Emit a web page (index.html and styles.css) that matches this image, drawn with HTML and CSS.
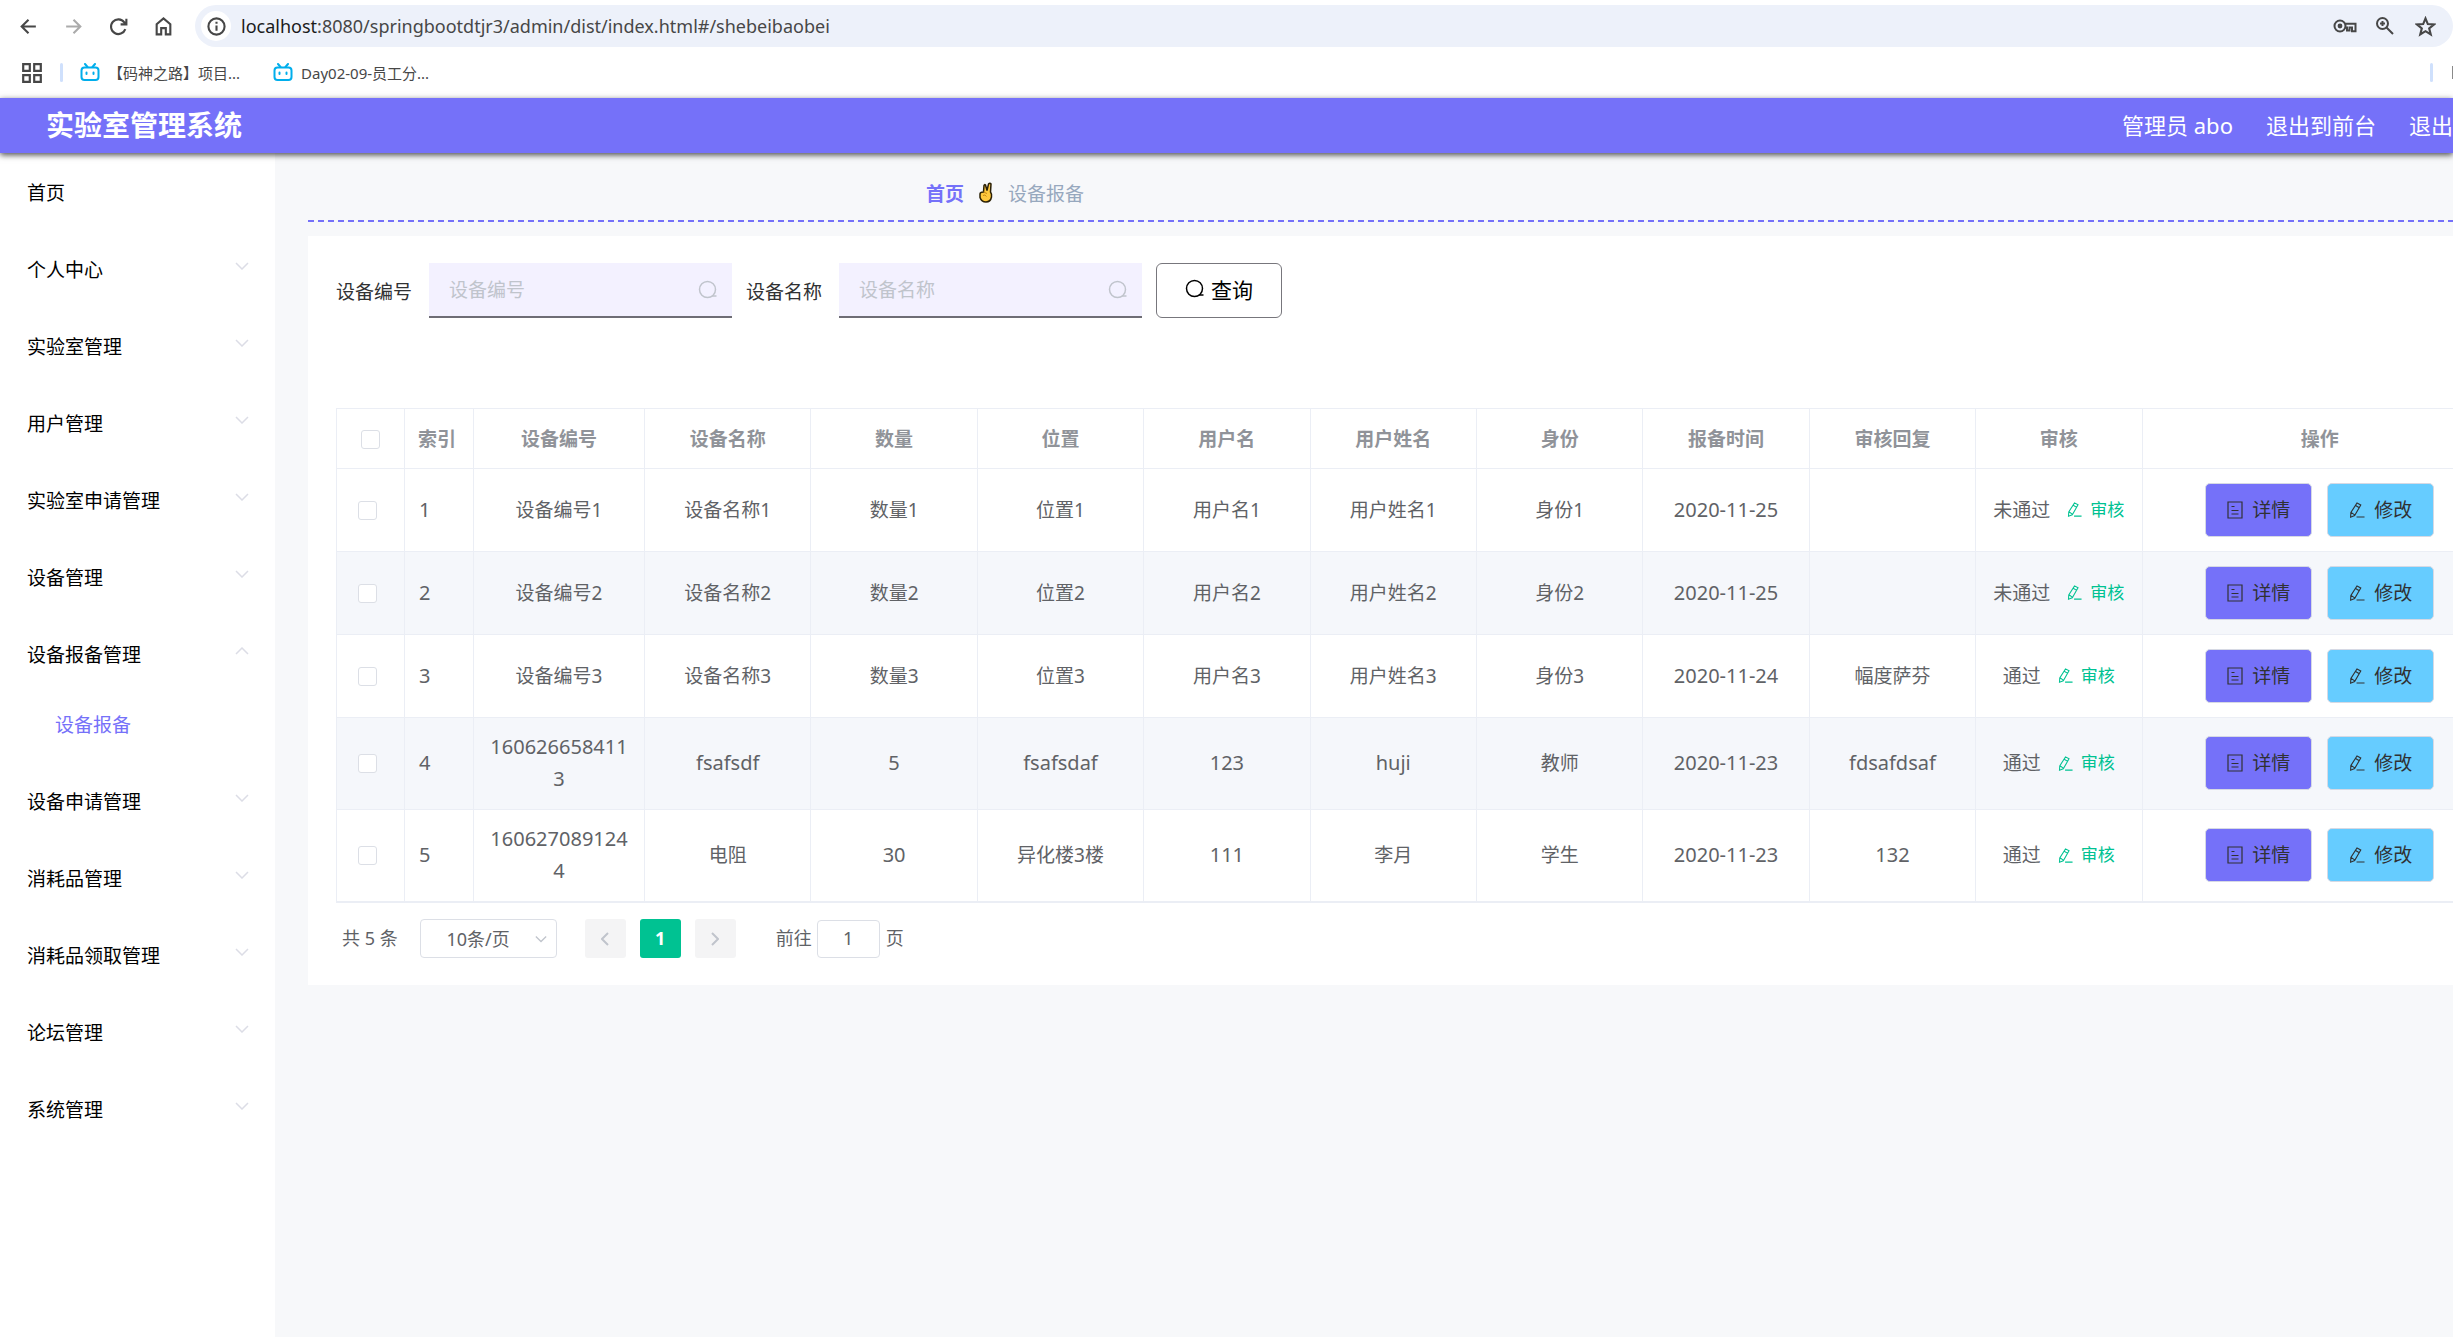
FILE: index.html
```html
<!DOCTYPE html>
<html lang="zh-CN">
<head>
<meta charset="utf-8">
<title>实验室管理系统</title>
<link rel="stylesheet" href="styles.css">
</head>
<body>
<svg class="sprite" aria-hidden="true">
  <symbol id="down" viewBox="0 0 14 8"><path d="M1 1l6 6 6-6"/></symbol>
  <symbol id="up" viewBox="0 0 14 8"><path d="M1 7l6-6 6 6"/></symbol>
  <symbol id="search" viewBox="0 0 20 20"><circle cx="9.5" cy="9.5" r="8"/><path d="M14 16h4.500"/></symbol>
  <symbol id="edit" viewBox="0 0 17 18"><path d="M8.500 1.500l4 2.200-6.500 11.300-4.300 1.700.3-5zM7 4.200l4 2.400M2.200 11.500l3.800 2.700M8 16.500h8.500"/></symbol>
  <symbol id="detail" viewBox="0 0 16 18"><path d="M1 1h14v16H1zM4.500 5.500h3M4.500 9.500h7M4.500 13h7"/></symbol>
  <symbol id="tv" viewBox="0 0 20 19"><path class="tv-line" d="M5 1l2.500 3M15 1l-2.500 3"/><rect class="tv-line" x="1.500" y="4.500" width="17" height="12.500" rx="3"/><path class="tv-line" d="M6.500 9.500v1.500M13.500 9.500v1.500"/></symbol>
</svg>

<div class="browser">
  <div class="toolbar">
    <button class="tool" aria-label="后退"><svg viewBox="0 0 20 20"><path d="M17 10H4M10 3.500L3.500 10l6.500 6.500"/></svg></button>
    <button class="tool muted" aria-label="前进"><svg viewBox="0 0 20 20"><path d="M3 10h13M10 3.500l6.500 6.500-6.500 6.500"/></svg></button>
    <button class="tool" aria-label="刷新"><svg viewBox="0 0 20 20"><path d="M16.500 12.500A7 7 0 1 1 15.500 6l1.500 1.700M17.500 2.500V8H12"/></svg></button>
    <button class="tool" aria-label="主页"><svg viewBox="0 0 20 20"><path d="M3.500 17.500V7.800L10 2.300l6.500 5.500v9.700h-4.300v-6H7.800v6z"/></svg></button>
    <div class="address">
      <span class="info"><svg viewBox="0 0 20 20"><circle cx="10" cy="10" r="7.700"/><path d="M10 9v5M10 5.500v1.800"/></svg></span>
      <span class="url"><b>localhost</b>:8080/springbootdtjr3/admin/dist/index.html#/shebeibaobei</span>
      <svg class="key" viewBox="0 0 24 16"><circle cx="7" cy="8" r="5.500"/><circle class="dot" cx="7" cy="8" r="2.400"/><path d="M12 5.700h10.500v7.500h-3.500V9.500h-2.500v3h-2.500v-3H12"/></svg>
      <svg class="mag" viewBox="0 0 20 20"><circle cx="7.500" cy="7.500" r="5.500"/><path d="M11.500 11.500l6.500 6.500M7.500 5v5M5 7.500h5"/></svg>
      <svg class="star" viewBox="0 0 20 20"><path d="M10 2.300l2.200 5.400 5.800.4-4.500 3.700 1.500 5.700-5-3.100-5 3.100 1.500-5.700L2 8.100l5.800-.4z"/></svg>
    </div>
  </div>
  <div class="bookmarks">
    <svg class="apps" viewBox="0 0 20 20"><path d="M2 2h6v6H2zM12 2h6v6h-6zM2 12h6v6H2zM12 12h6v6h-6z"/></svg>
    <span class="divider"></span>
    <a class="bookmark" href="#"><svg><use href="#tv"/></svg>【码神之路】项目...</a>
    <a class="bookmark" href="#"><svg><use href="#tv"/></svg>Day02-09-员工分...</a>
    <span class="divider last"></span>
    <span class="folder"></span>
  </div>
</div>

<header class="header">
  <h1>实验室管理系统</h1>
  <nav><span>管理员 abo</span><a href="#">退出到前台</a><a href="#">退出</a></nav>
</header>

<div class="layout">
  <aside class="sidebar">
    <a class="item" href="#">首页</a>
    <a class="item" href="#">个人中心<svg><use href="#down"/></svg></a>
    <a class="item" href="#">实验室管理<svg><use href="#down"/></svg></a>
    <a class="item" href="#">用户管理<svg><use href="#down"/></svg></a>
    <a class="item" href="#">实验室申请管理<svg><use href="#down"/></svg></a>
    <a class="item" href="#">设备管理<svg><use href="#down"/></svg></a>
    <a class="item" href="#">设备报备管理<svg><use href="#up"/></svg></a>
    <a class="subitem" href="#">设备报备</a>
    <a class="item" href="#">设备申请管理<svg><use href="#down"/></svg></a>
    <a class="item" href="#">消耗品管理<svg><use href="#down"/></svg></a>
    <a class="item" href="#">消耗品领取管理<svg><use href="#down"/></svg></a>
    <a class="item" href="#">论坛管理<svg><use href="#down"/></svg></a>
    <a class="item" href="#">系统管理<svg><use href="#down"/></svg></a>
  </aside>

  <main class="main">
    <div class="wide">
      <nav class="breadcrumb">
        <a href="#">首页</a>
        <svg viewBox="0 0 14 21"><path d="M4.500 10L5 3.500Q5.500 2 6.500 3L8 8.500 9.500 2Q11 .3 12 2l-.5 8q1.500 2 1 5-1 5-5.500 5T1 15.500V12q0-2 3.500-2z"/><path class="crease" d="M4.500 10l3.500 1.500M4 13.500q2-1.500 3.500 1"/></svg>
        <span>设备报备</span>
      </nav>

      <section class="card">
        <form class="search">
          <label for="code">设备编号</label>
          <div class="field"><input id="code" type="text" placeholder="设备编号"><svg><use href="#search"/></svg></div>
          <label for="name">设备名称</label>
          <div class="field"><input id="name" type="text" placeholder="设备名称"><svg><use href="#search"/></svg></div>
          <button type="button" class="query"><svg><use href="#search"/></svg>查询</button>
        </form>

        <table>
          <colgroup><col class="c-check"><col class="c-index"><col class="c-code"><col span="9" class="c-text"><col></colgroup>
          <thead>
            <tr><th><input type="checkbox" aria-label="全选"></th><th class="left">索引</th><th>设备编号</th><th>设备名称</th><th>数量</th><th>位置</th><th>用户名</th><th>用户姓名</th><th>身份</th><th>报备时间</th><th>审核回复</th><th>审核</th><th>操作</th></tr>
          </thead>
          <tbody>
            <tr><td class="left"><input type="checkbox" aria-label="选择1"></td><td class="left num">1</td><td>设备编号1</td><td>设备名称1</td><td>数量1</td><td>位置1</td><td>用户名1</td><td>用户姓名1</td><td>身份1</td><td class="num">2020-11-25</td><td></td>
              <td class="audit"><div><span>未通过</span><button><svg><use href="#edit"/></svg>审核</button></div></td>
              <td><div class="ops"><button class="view"><svg><use href="#detail"/></svg>详情</button><button class="change"><svg><use href="#edit"/></svg>修改</button></div></td></tr>
            <tr><td class="left"><input type="checkbox" aria-label="选择2"></td><td class="left num">2</td><td>设备编号2</td><td>设备名称2</td><td>数量2</td><td>位置2</td><td>用户名2</td><td>用户姓名2</td><td>身份2</td><td class="num">2020-11-25</td><td></td>
              <td class="audit"><div><span>未通过</span><button><svg><use href="#edit"/></svg>审核</button></div></td>
              <td><div class="ops"><button class="view"><svg><use href="#detail"/></svg>详情</button><button class="change"><svg><use href="#edit"/></svg>修改</button></div></td></tr>
            <tr><td class="left"><input type="checkbox" aria-label="选择3"></td><td class="left num">3</td><td>设备编号3</td><td>设备名称3</td><td>数量3</td><td>位置3</td><td>用户名3</td><td>用户姓名3</td><td>身份3</td><td class="num">2020-11-24</td><td>幅度萨芬</td>
              <td class="audit"><div><span>通过</span><button><svg><use href="#edit"/></svg>审核</button></div></td>
              <td><div class="ops"><button class="view"><svg><use href="#detail"/></svg>详情</button><button class="change"><svg><use href="#edit"/></svg>修改</button></div></td></tr>
            <tr><td class="left"><input type="checkbox" aria-label="选择4"></td><td class="left num">4</td><td class="num">1606266584113</td><td class="num">fsafsdf</td><td class="num">5</td><td class="num">fsafsdaf</td><td class="num">123</td><td class="num">huji</td><td>教师</td><td class="num">2020-11-23</td><td class="num">fdsafdsaf</td>
              <td class="audit"><div><span>通过</span><button><svg><use href="#edit"/></svg>审核</button></div></td>
              <td><div class="ops"><button class="view"><svg><use href="#detail"/></svg>详情</button><button class="change"><svg><use href="#edit"/></svg>修改</button></div></td></tr>
            <tr><td class="left"><input type="checkbox" aria-label="选择5"></td><td class="left num">5</td><td class="num">1606270891244</td><td>电阻</td><td class="num">30</td><td>异化楼3楼</td><td class="num">111</td><td>李月</td><td>学生</td><td class="num">2020-11-23</td><td class="num">132</td>
              <td class="audit"><div><span>通过</span><button><svg><use href="#edit"/></svg>审核</button></div></td>
              <td><div class="ops"><button class="view"><svg><use href="#detail"/></svg>详情</button><button class="change"><svg><use href="#edit"/></svg>修改</button></div></td></tr>
          </tbody>
        </table>

        <div class="pagination">
          <span>共 5 条</span>
          <div class="size"><select aria-label="每页条数"><option>10条/页</option></select><svg><use href="#down"/></svg></div>
          <div class="pages">
            <button aria-label="上一页"><svg viewBox="0 0 8 14"><path d="M7 1L1 7l6 6"/></svg></button>
            <button class="current">1</button>
            <button aria-label="下一页"><svg viewBox="0 0 8 14"><path d="M1 1l6 6-6 6"/></svg></button>
          </div>
          <label class="jump">前往<input type="text" value="1">页</label>
        </div>
      </section>
    </div>
  </main>
</div>
</body>
</html>
```

FILE: styles.css
```css
* { box-sizing: border-box; }

body {
  margin: 0;
  min-height: 100vh;
  display: flex;
  flex-direction: column;
  overflow: hidden;
  background: #f7f8fa;
  color: #606266;
  font: 19px "Noto Sans", "Noto Sans CJK SC", sans-serif;
}

button, input, select { font: inherit; color: inherit; }
button { padding: 0; border: 0; background: none; }
a { color: inherit; text-decoration: none; }
svg { flex: none; fill: none; stroke: currentColor; }
.sprite { position: absolute; width: 0; height: 0; }

/* browser chrome */
.browser { height: 98px; background: #fff; color: #474747; }
.toolbar { display: flex; align-items: center; padding: 5px 0 0 18px; }
.tool { width: 45px; height: 42px; display: flex; align-items: center; }
.tool svg { width: 21px; height: 21px; stroke-width: 2; }
.muted { color: #ababab; }
.address {
  flex: 1;
  height: 42px;
  margin-left: -3px;
  padding: 0 17px 0 6px;
  display: flex;
  align-items: center;
  border-radius: 21px;
  background: #edf1fa;
}
.info { width: 30px; height: 30px; display: grid; place-items: center; border-radius: 50%; background: #fff; }
.info svg { width: 21px; height: 21px; stroke-width: 2; }
.url { flex: 1; margin-left: 10px; font-size: 18px; }
.url b { font-weight: 400; color: #1b1b1b; }
.key { width: 24px; height: 16px; stroke-width: 2; }
.dot { fill: currentColor; stroke: none; }
.mag { width: 20px; height: 20px; margin: 0 20px 0 18px; stroke-width: 2; }
.star { width: 21px; height: 21px; stroke-width: 2; }

.bookmarks { height: 51px; display: flex; align-items: center; padding-left: 21px; font-size: 15px; }
.apps { width: 22px; height: 22px; stroke-width: 2; }
.divider { width: 3px; height: 19px; margin: 0 17px; border-radius: 2px; background: #cfe0fc; }
.divider.last { margin: 0 19px 0 auto; }
.folder { width: 1px; height: 13px; background: #8a8a8a; }
.bookmark { display: flex; align-items: center; gap: 8px; margin-right: 33px; }
.bookmark svg { width: 20px; height: 19px; }
.tv-line { stroke: #00aeec; stroke-width: 2; stroke-linecap: round; }

/* page header */
.header {
  position: relative;
  height: 55px;
  padding: 0 0 3px 46px;
  display: flex;
  align-items: center;
  justify-content: space-between;
  background: #7571f9;
  color: #fff;
  box-shadow: 0 2px 6px rgba(0, 0, 0, .7);
}
.header h1 { margin: 0; font-size: 28px; font-weight: 700; }
.header nav { display: flex; gap: 33px; font-size: 22px; }

.layout { flex: 1; display: flex; }

/* side menu */
.sidebar { width: 275px; flex: none; background: #fff; color: #000; }
.item { height: 77px; padding: 0 26px 0 27px; display: flex; align-items: center; justify-content: space-between; }
.item svg { width: 14px; height: 8px; margin-bottom: 6px; color: #dcdde6; stroke-width: 1.500; }
.subitem { display: block; height: 70px; padding-left: 55px; line-height: 66px; color: #7571f9; }

/* the records area runs wider than the window and is clipped */
.main { flex: 1; min-width: 0; padding-left: 33px; overflow: hidden; }
.wide { margin-right: -73px; }

.breadcrumb {
  height: 69px;
  padding: 10px 0 0 618px;
  display: flex;
  align-items: center;
  gap: 12px;
  color: #97a8be;
  background: repeating-linear-gradient(90deg, #7571f9 0 6px, transparent 6px 10px) left bottom / 100% 2px no-repeat;
}
.breadcrumb a { color: #7571f9; font-weight: 700; }
.breadcrumb svg { width: 14px; height: 21px; margin: 0 3px; stroke: #2b2005; stroke-width: 1.500; fill: #ffc83d; }
.breadcrumb .crease { stroke: #c98a14; stroke-width: 1; fill: none; }

.card { margin-top: 14px; padding: 27px 28px; background: #fff; }

/* search form */
.search { display: flex; align-items: center; }
.search label { margin-right: 17px; color: #303133; }
.field {
  width: 303px;
  height: 55px;
  margin-right: 14px;
  padding: 0 14px 0 20px;
  display: flex;
  align-items: center;
  border-bottom: 2px solid #6e6d75;
  background: #f3f1ff;
}
.field input { flex: 1; min-width: 0; padding: 0; border: 0; outline: 0; background: none; }
.field input::placeholder { color: #c0c4cc; opacity: 1; }
.field svg { width: 20px; height: 20px; color: #c0c4cc; stroke-width: 1.500; }
.query {
  width: 126px;
  height: 55px;
  padding-bottom: 3px;
  display: flex;
  align-items: center;
  justify-content: center;
  gap: 6px;
  border: 1px solid #77767c;
  border-radius: 6px;
  background: #fff;
  color: #000;
  font-size: 21px;
}
.query svg { width: 20px; height: 20px; stroke-width: 1.500; }

/* records */
table {
  width: 100%;
  margin-top: 90px;
  table-layout: fixed;
  border-collapse: separate;
  border-spacing: 0;
  border: 1px solid #ebeef5;
  border-width: 1px 0 1px 1px;
}
.c-check { width: 68px; }
.c-index { width: 69px; }
.c-code { width: 171px; }
.c-text { width: 7.7%; }
th, td { border: 1px solid #ebeef5; border-width: 0 1px 1px 0; text-align: center; line-height: 32px; }
th { height: 60px; padding: 0; color: #909399; font-weight: 700; }
td { height: 83px; padding: 13px 14px 14px; word-break: break-all; }
th.left { padding-left: 13px; text-align: left; }
td.left { padding-left: 14px; text-align: left; }
td.left:first-child { padding-left: 21px; }
tbody tr:nth-child(even) { background: #f5f7fb; }
.num { font-size: 20px; }
input[type="checkbox"] {
  appearance: none;
  width: 19px;
  height: 19px;
  margin: 0 0 2px;
  display: inline-block;
  vertical-align: middle;
  border: 1px solid #dcdfe6;
  border-radius: 3px;
  background: #fff;
}
td.audit { padding-left: 0; padding-right: 0; }
.audit div, .audit button, .ops, .ops button { display: flex; align-items: center; justify-content: center; }
.audit div { gap: 17px; }
.audit button { gap: 8px; color: #00c292; font-size: 17px; }
.audit svg { width: 15px; height: 17px; stroke-width: 1.200; }
.ops { gap: 15px; }
.ops button { width: 107px; height: 54px; gap: 9px; border: 1px solid #d6d9e4; border-radius: 5px; color: #303133; }
.ops svg { width: 16px; height: 18px; stroke-width: 1.200; }
.ops .view { background: #7571f9; }
.ops .change { background: #66ccff; }

/* pagination */
.pagination { height: 55px; padding: 16px 0 0 6px; display: flex; align-items: flex-start; font-size: 18px; line-height: 39px; }
.size { width: 137px; height: 39px; margin: 0 28px 0 22px; display: grid; align-items: center; }
.size select {
  grid-area: 1 / 1;
  width: 100%;
  height: 39px;
  padding: 0 20px 0 0;
  appearance: none;
  border: 1px solid #dcdfe6;
  border-radius: 4px;
  background: #fff;
  text-align: center;
  text-align-last: center;
}
.size svg { grid-area: 1 / 1; justify-self: end; width: 12px; height: 8px; margin-right: 10px; color: #c0c4cc; stroke-width: 1.500; }
.pages { display: flex; gap: 14px; }
.pages button { width: 41px; height: 39px; display: grid; place-items: center; border-radius: 3px; background: #f4f4f5; color: #c0c4cc; }
.pages svg { width: 8px; height: 14px; stroke-width: 2; }
.pages .current { background: #00c292; color: #fff; font-weight: 700; }
.jump { display: flex; align-items: center; margin-left: 40px; }
.jump input { width: 63px; height: 38px; margin: 0 6px 0 5px; padding: 0; border: 1px solid #dcdfe6; border-radius: 4px; text-align: center; }
```
